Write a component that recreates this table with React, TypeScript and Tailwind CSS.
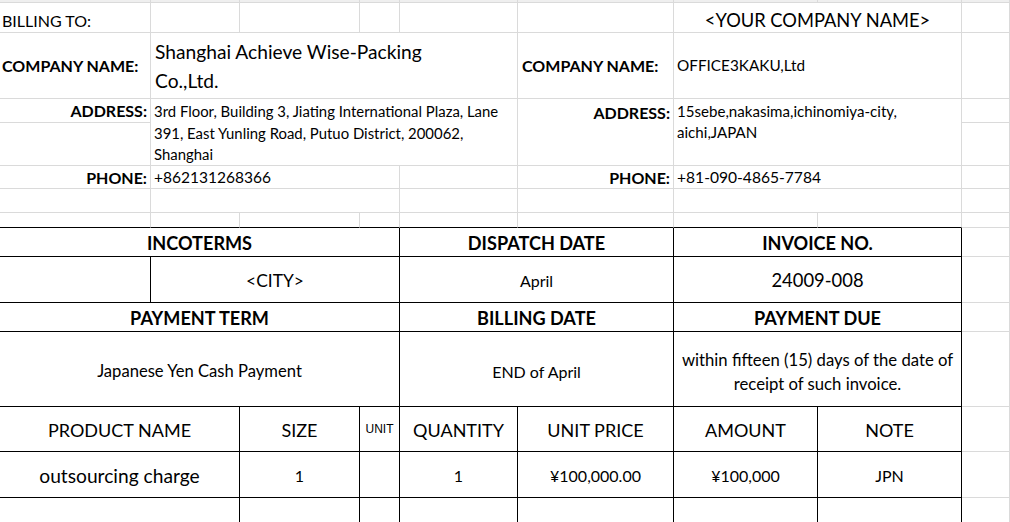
import React from "react";

// spreadsheet gridlines
const L = "border-r border-b border-[#dadada]";
// invoice table borders
const B = "border-r border-b border-black";
// row just above the table: light sides, black bottom edge
const T = "border-r border-b border-[#dadada] border-b-black";
const S = "border-r border-b border-[#dadada] bg-[#efefef]";

const items = [
  { name: "outsourcing charge", size: "1", unit: "", qty: "1", price: "¥100,000.00", amount: "¥100,000", note: "JPN" },
];

const App: React.FC = () => {
  return (
    <div className="w-[1010px] h-[522px] overflow-hidden bg-white text-black font-[Lato,sans-serif] text-[16px] leading-none">
      <div className="grid grid-cols-[151px_89px_120px_40px_118px_156px_144px_144px_48px] grid-rows-[3px_30px_66px_24px_43px_23px_24px_15px_29px_46px_29px_75px_45px_46px_30px]">
        {/* top strip */}
        <div className={`${S} col-start-1 row-start-1`} />
        <div className={`${S} col-start-2 row-start-1`} />
        <div className={`${S} col-start-3 row-start-1`} />
        <div className={`${S} col-start-4 row-start-1`} />
        <div className={`${S} col-start-5 row-start-1`} />
        <div className={`${S} col-start-6 row-start-1`} />
        <div className={`${S} col-start-7 row-start-1`} />
        <div className={`${S} col-start-8 row-start-1`} />
        <div className={`${S} col-start-9 row-start-1`} />

        {/* billing to */}
        <div className={`${L} col-start-1 row-start-2 flex items-end pb-[3px] pl-[2px] whitespace-nowrap`}>
          BILLING TO:
        </div>
        <div className={`${L} col-start-2 row-start-2`} />
        <div className={`${L} col-start-3 row-start-2`} />
        <div className={`${L} col-start-4 row-start-2`} />
        <div className={`${L} col-start-5 row-start-2`} />
        <div className={`${L} col-start-6 row-start-2`} />
        <div className={`${L} col-start-7 col-span-2 row-start-2 flex items-end justify-center pb-[3px] text-[18.3px] whitespace-nowrap`}>
          &lt;YOUR COMPANY NAME&gt;
        </div>
        <div className={`${L} col-start-9 row-start-2`} />

        {/* company names */}
        <div className={`${L} col-start-1 row-start-3 flex items-center pl-[2px] pt-[1px] font-bold whitespace-nowrap`}>
          COMPANY NAME:
        </div>
        <div className={`${L} col-start-2 col-span-4 row-start-3 flex items-center pl-[4px] text-[19.2px] leading-[29px] whitespace-nowrap`}>
          <div>
            Shanghai Achieve Wise-Packing
            <br />
            Co.,Ltd.
          </div>
        </div>
        <div className={`${L} col-start-6 row-start-3 flex items-center pl-[4px] pt-[1px] font-bold whitespace-nowrap`}>
          COMPANY NAME:
        </div>
        <div className={`${L} col-start-7 col-span-2 row-start-3 flex items-center pl-[3px] pt-[1px] text-[15.3px] whitespace-nowrap`}>
          OFFICE3KAKU,Ltd
        </div>
        <div className={`${L} col-start-9 row-start-3`} />

        {/* addresses */}
        <div className={`${L} col-start-1 row-start-4 flex items-center justify-end pr-[3px] pt-[1px] font-bold`}>
          ADDRESS:
        </div>
        <div className={`${L} col-start-1 row-start-5`} />
        <div className={`${L} col-start-2 col-span-4 row-start-4 row-span-2 pl-[3px] pt-[2px] text-[14.9px] leading-[21.5px] whitespace-nowrap`}>
          3rd Floor, Building 3, Jiating International Plaza, Lane
          <br />
          391, East Yunling Road, Putuo District, 200062,
          <br />
          Shanghai
        </div>
        <div className={`${L} col-start-6 row-start-4 row-span-2 flex items-start justify-end pr-[3px] pt-[6px] font-bold`}>
          ADDRESS:
        </div>
        <div className={`${L} col-start-7 col-span-2 row-start-4 row-span-2 pl-[3px] pt-[2px] text-[15.1px] leading-[21px] whitespace-nowrap`}>
          15sebe,nakasima,ichinomiya-city,
          <br />
          aichi,JAPAN
        </div>
        <div className={`${L} col-start-9 row-start-4`} />
        <div className={`${L} col-start-9 row-start-5`} />

        {/* phones */}
        <div className={`${L} col-start-1 row-start-6 flex items-center justify-end pr-[3px] pt-[1px] font-bold`}>
          PHONE:
        </div>
        <div className={`${L} col-start-2 col-span-3 row-start-6 flex items-center pl-[3px] pt-[1px] text-[15.5px]`}>
          +862131268366
        </div>
        <div className={`${L} col-start-5 row-start-6`} />
        <div className={`${L} col-start-6 row-start-6 flex items-center justify-end pr-[3px] pt-[1px] font-bold`}>
          PHONE:
        </div>
        <div className={`${L} col-start-7 col-span-2 row-start-6 flex items-center pl-[3px] pt-[1px] text-[15.6px]`}>
          +81-090-4865-7784
        </div>
        <div className={`${L} col-start-9 row-start-6`} />

        {/* blank rows */}
        <div className={`${L} col-start-1 row-start-7`} />
        <div className={`${L} col-start-2 col-span-3 row-start-7`} />
        <div className={`${L} col-start-5 row-start-7`} />
        <div className={`${L} col-start-6 row-start-7`} />
        <div className={`${L} col-start-7 col-span-2 row-start-7`} />
        <div className={`${L} col-start-9 row-start-7`} />

        <div className={`${T} col-start-1 row-start-8`} />
        <div className={`${T} col-start-2 row-start-8`} />
        <div className={`${T} col-start-3 row-start-8`} />
        <div className={`${T} col-start-4 row-start-8`} />
        <div className={`${T} col-start-5 row-start-8`} />
        <div className={`${T} col-start-6 row-start-8`} />
        <div className={`${T} col-start-7 row-start-8`} />
        <div className={`${T} col-start-8 row-start-8`} />
        <div className={`${L} col-start-9 row-start-8`} />

        {/* terms block */}
        <div className={`${B} col-start-1 col-span-4 row-start-9 flex items-center justify-center pt-[2px] text-[18.1px] font-bold`}>
          INCOTERMS
        </div>
        <div className={`${B} col-start-5 col-span-2 row-start-9 flex items-center justify-center pt-[2px] text-[18.1px] font-bold`}>
          DISPATCH DATE
        </div>
        <div className={`${B} col-start-7 col-span-2 row-start-9 flex items-center justify-center pt-[2px] text-[18.1px] font-bold`}>
          INVOICE NO.
        </div>
        <div className={`${L} col-start-9 row-start-9`} />

        <div className={`${B} col-start-1 row-start-10`} />
        <div className={`${B} col-start-2 col-span-3 row-start-10 flex items-center justify-center pt-[2px] text-[17.4px]`}>
          &lt;CITY&gt;
        </div>
        <div className={`${B} col-start-5 col-span-2 row-start-10 flex items-center justify-center pt-[2px]`}>
          April
        </div>
        <div className={`${B} col-start-7 col-span-2 row-start-10 flex items-center justify-center pt-[2px] text-[18.4px]`}>
          24009-008
        </div>
        <div className={`${L} col-start-9 row-start-10`} />

        <div className={`${B} col-start-1 col-span-4 row-start-11 flex items-center justify-center pt-[3px] text-[18.1px] font-bold`}>
          PAYMENT TERM
        </div>
        <div className={`${B} col-start-5 col-span-2 row-start-11 flex items-center justify-center pt-[3px] text-[18.1px] font-bold`}>
          BILLING DATE
        </div>
        <div className={`${B} col-start-7 col-span-2 row-start-11 flex items-center justify-center pt-[3px] text-[18.1px] font-bold`}>
          PAYMENT DUE
        </div>
        <div className={`${L} col-start-9 row-start-11`} />

        <div className={`${B} col-start-1 col-span-4 row-start-12 flex items-center justify-center pt-[5px] text-[16.6px]`}>
          Japanese Yen Cash Payment
        </div>
        <div className={`${B} col-start-5 col-span-2 row-start-12 flex items-center justify-center pt-[5px]`}>
          END of April
        </div>
        <div className={`${B} col-start-7 col-span-2 row-start-12 flex items-center justify-center pt-[5px] text-center text-[16.7px] leading-[24px]`}>
          <div>
            within fifteen (15) days of the date of
            <br />
            receipt of such invoice.
          </div>
        </div>
        <div className={`${L} col-start-9 row-start-12`} />

        {/* product table */}
        <div className={`${B} col-start-1 col-span-2 row-start-13 flex items-center justify-center pt-[1px] text-[18px]`}>
          PRODUCT NAME
        </div>
        <div className={`${B} col-start-3 row-start-13 flex items-center justify-center pt-[1px] text-[18px]`}>
          SIZE
        </div>
        <div className={`${B} col-start-4 row-start-13 flex items-center justify-center font-['Liberation_Sans',sans-serif] text-[12px]`}>
          UNIT
        </div>
        <div className={`${B} col-start-5 row-start-13 flex items-center justify-center pt-[1px] text-[18px]`}>
          QUANTITY
        </div>
        <div className={`${B} col-start-6 row-start-13 flex items-center justify-center pt-[1px] text-[18px]`}>
          UNIT PRICE
        </div>
        <div className={`${B} col-start-7 row-start-13 flex items-center justify-center pt-[1px] text-[18px]`}>
          AMOUNT
        </div>
        <div className={`${B} col-start-8 row-start-13 flex items-center justify-center pt-[1px] text-[18px]`}>
          NOTE
        </div>
        <div className={`${L} col-start-9 row-start-13`} />

        {items.map((it) => (
          <React.Fragment key={it.name}>
            <div className={`${B} col-start-1 col-span-2 row-start-14 flex items-center justify-center pt-[2px] text-[19.2px]`}>
              {it.name}
            </div>
            <div className={`${B} col-start-3 row-start-14 flex items-center justify-center pt-[2px]`}>
              {it.size}
            </div>
            <div className={`${B} col-start-4 row-start-14`}>{it.unit}</div>
            <div className={`${B} col-start-5 row-start-14 flex items-center justify-center pt-[2px]`}>
              {it.qty}
            </div>
            <div className={`${B} col-start-6 row-start-14 flex items-center justify-center pt-[2px]`}>
              {it.price}
            </div>
            <div className={`${B} col-start-7 row-start-14 flex items-center justify-center pt-[2px]`}>
              {it.amount}
            </div>
            <div className={`${B} col-start-8 row-start-14 flex items-center justify-center pt-[2px]`}>
              {it.note}
            </div>
            <div className={`${L} col-start-9 row-start-14`} />
          </React.Fragment>
        ))}

        <div className={`${B} col-start-1 col-span-2 row-start-15`} />
        <div className={`${B} col-start-3 row-start-15`} />
        <div className={`${B} col-start-4 row-start-15`} />
        <div className={`${B} col-start-5 row-start-15`} />
        <div className={`${B} col-start-6 row-start-15`} />
        <div className={`${B} col-start-7 row-start-15`} />
        <div className={`${B} col-start-8 row-start-15`} />
        <div className={`${L} col-start-9 row-start-15`} />
      </div>
    </div>
  );
};

export default App;
